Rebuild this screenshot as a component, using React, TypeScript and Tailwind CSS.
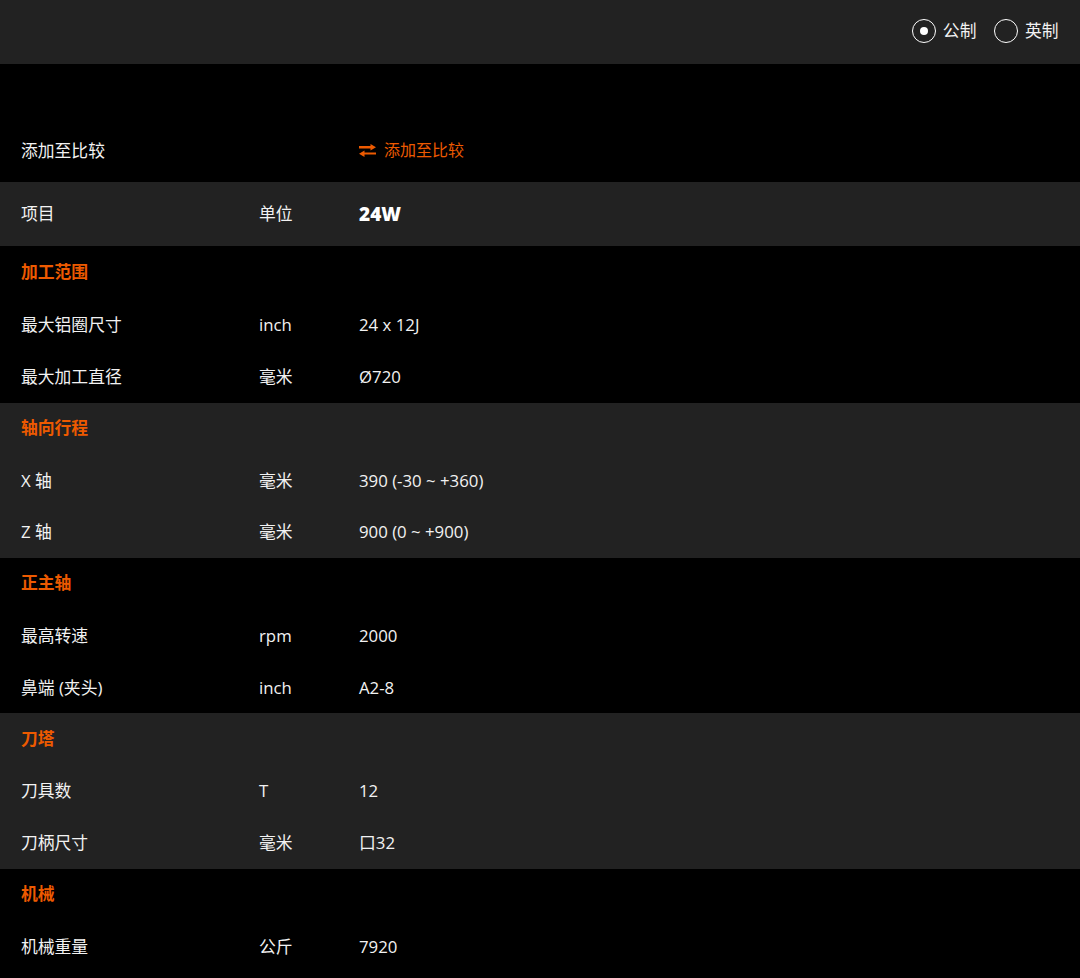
import React from 'react';

interface SpecRow {
  label: string;
  unit: string;
  value: string;
}

interface SpecGroup {
  title: string;
  dark: boolean;
  rows: SpecRow[];
}

const groups: SpecGroup[] = [
  {
    title: '加工范围',
    dark: false,
    rows: [
      { label: '最大铝圈尺寸', unit: 'inch', value: '24 x 12J' },
      { label: '最大加工直径', unit: '毫米', value: 'Ø720' },
    ],
  },
  {
    title: '轴向行程',
    dark: true,
    rows: [
      { label: 'X 轴', unit: '毫米', value: '390 (-30 ~ +360)' },
      { label: 'Z 轴', unit: '毫米', value: '900 (0 ~ +900)' },
    ],
  },
  {
    title: '正主轴',
    dark: false,
    rows: [
      { label: '最高转速', unit: 'rpm', value: '2000' },
      { label: '鼻端 (夹头)', unit: 'inch', value: 'A2-8' },
    ],
  },
  {
    title: '刀塔',
    dark: true,
    rows: [
      { label: '刀具数', unit: 'T', value: '12' },
      { label: '刀柄尺寸', unit: '毫米', value: '口32' },
    ],
  },
  {
    title: '机械',
    dark: false,
    rows: [{ label: '机械重量', unit: '公斤', value: '7920' }],
  },
];

const Radio = ({ label, checked }: { label: string; checked?: boolean }) => (
  <div className="flex items-center gap-[6.5px]">
    <span className="flex h-6 w-6 items-center justify-center rounded-full border border-white">
      {checked && <span className="h-2 w-2 rounded-full bg-white" />}
    </span>
    <span>{label}</span>
  </div>
);

// two opposed arrows, same as the compare link
const ExchangeIcon = () => (
  <svg viewBox="0 0 17 13" className="h-[13px] w-[17px] fill-current">
    <path d="M0 2h11.5V0L17 3.2l-5.5 3.2v-2H0z" />
    <path d="M17 10.6H5.5V13L0 9.8l5.5-3.2v2H17z" />
  </svg>
);

const App = () => {
  return (
    <div className="h-[978px] overflow-hidden bg-black text-[16.8px] text-[#f2f2f2] [font-family:'Open_Sans','Noto_Sans_CJK_SC',sans-serif]">
      <div className="flex h-16 items-center justify-end gap-[18px] bg-[#222222] pr-[21.5px] pb-[2px]">
        <Radio label="公制" checked />
        <Radio label="英制" />
      </div>

      <div className="mt-[54px] flex h-16 items-center pl-[21px]">
        <div className="w-[338px] pt-[1px]">添加至比较</div>
        <div className="flex items-center gap-2 text-[16px] text-[#ed5a00]">
          <ExchangeIcon />
          <span>添加至比较</span>
        </div>
      </div>

      <div className="flex h-16 items-center bg-[#222222] pl-[21px]">
        <div className="w-[238px]">项目</div>
        <div className="w-[100px]">单位</div>
        <div className="text-[19px] font-extrabold text-white">24W</div>
      </div>

      <div className="pt-[1.2px]">
        {groups.map(group => (
          <div key={group.title} className={group.dark ? 'bg-[#222222]' : 'bg-black'}>
            <div className="flex h-[51.8px] items-center pb-[2px] pl-[21px] font-bold text-[#ed5a00]">{group.title}</div>
            {group.rows.map(row => (
              <div key={row.label} className="flex h-[51.8px] items-center pl-[21px]">
                <div className="w-[238px]">{row.label}</div>
                <div className="w-[100px]">{row.unit}</div>
                <div>{row.value}</div>
              </div>
            ))}
          </div>
        ))}
      </div>
    </div>
  );
};

export default App;
